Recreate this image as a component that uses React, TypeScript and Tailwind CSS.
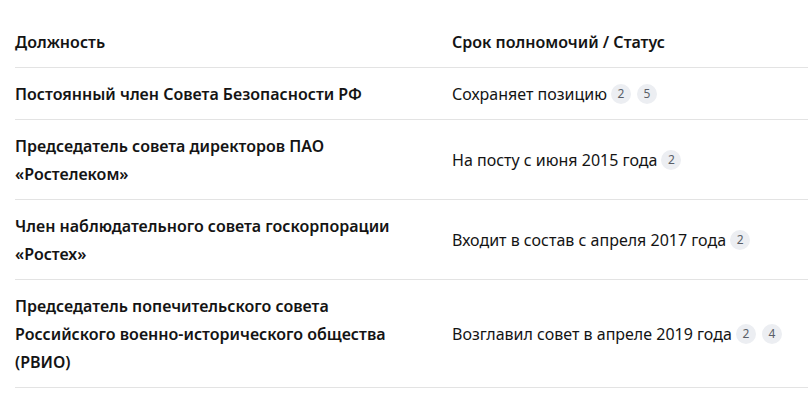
import React from "react";

const Badge = ({ n, first }: { n: string; first: boolean }) => (
  <span
    className={`${first ? "ml-[4px]" : "ml-[6px]"} flex h-[20px] w-[20px] shrink-0 items-center justify-center rounded-full bg-[#eceef2] text-[12px] leading-none text-[#5a5f68]`}
  >
    {n}
  </span>
);

const rows: { title: React.ReactNode; status: string; badges: string[] }[] = [
  { title: "Постоянный член Совета Безопасности РФ", status: "Сохраняет позицию", badges: ["2", "5"] },
  {
    title: (
      <>
        Председатель совета директоров ПАО
        <br />
        «Ростелеком»
      </>
    ),
    status: "На посту с июня 2015 года",
    badges: ["2"],
  },
  {
    title: (
      <>
        Член наблюдательного совета госкорпорации
        <br />
        «Ростех»
      </>
    ),
    status: "Входит в состав с апреля 2017 года",
    badges: ["2"],
  },
  {
    title: (
      <>
        Председатель попечительского совета
        <br />
        Российского военно-исторического общества
        <br />
        (РВИО)
      </>
    ),
    status: "Возглавил совет в апреле 2019 года",
    badges: ["2", "4"],
  },
];

export default function App() {
  return (
    <div
      className="min-h-[395px] w-[808px] overflow-hidden bg-white pl-[15px] pt-[16px] text-[#141414]"
      style={{ fontFamily: '"Noto Sans", "Open Sans", sans-serif' }}
    >
      <table className="w-[820px] border-collapse text-[16px] leading-[28px]">
        <thead>
          <tr className="border-b border-[#e3e3e3]">
            <th className="w-[437px] pb-[11px] pt-[12px] text-left font-semibold">Должность</th>
            <th className="pb-[11px] pt-[12px] text-left font-semibold">Срок полномочий / Статус</th>
          </tr>
        </thead>
        <tbody>
          {rows.map((r, i) => (
            <tr key={i} className="border-b border-[#e3e3e3]">
              <td className="pb-[11px] pt-[12px] align-middle font-semibold">{r.title}</td>
              <td className="pb-[11px] pt-[12px] align-middle font-normal">
                <div className="flex items-center">
                  <span>{r.status}</span>
                  {r.badges.map((b, j) => (
                    <Badge key={j} n={b} first={j === 0} />
                  ))}
                </div>
              </td>
            </tr>
          ))}
        </tbody>
      </table>
    </div>
  );
}
